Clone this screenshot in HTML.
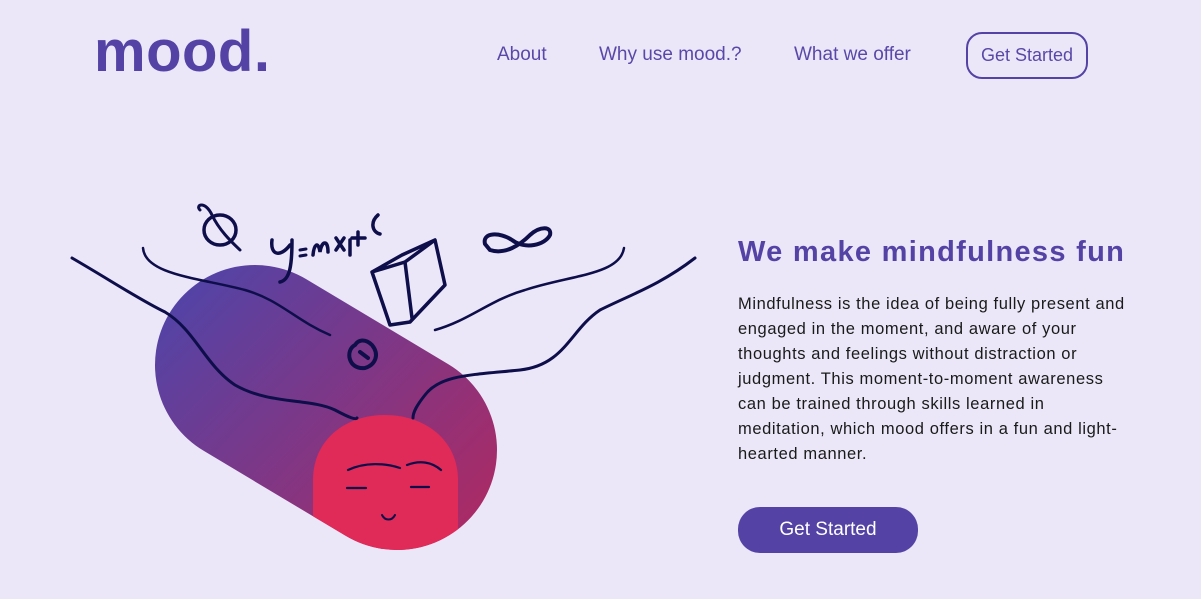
<!DOCTYPE html>
<html><head><meta charset="utf-8"><style>
*{margin:0;padding:0;box-sizing:border-box}
body{width:1201px;height:599px;background:#ebe7f8;font-family:"Liberation Sans",sans-serif;position:relative;overflow:hidden}
.logo{position:absolute;left:94px;top:18px;font-size:58px;font-weight:bold;color:#5443a5;letter-spacing:0.5px}
.nav a{position:absolute;top:44px;font-size:19px;color:#5a48a8;text-decoration:none;white-space:nowrap}
.gs{position:absolute;left:966px;top:32px;width:122px;height:47px;border:2px solid #5443a5;border-radius:16px;color:#5a48a8;font-size:18px;text-align:center;line-height:43px}
h1{position:absolute;left:738px;top:236px;font-size:29px;color:#5443a5;font-weight:bold;letter-spacing:1.3px;white-space:nowrap}
p{position:absolute;left:738px;top:292px;font-size:16.5px;line-height:25px;color:#1a1a1a;letter-spacing:0.6px;white-space:nowrap}
.btn{position:absolute;left:738px;top:507px;width:180px;height:46px;border-radius:22px;background:#5443a5;color:#fff;font-size:19px;text-align:center;line-height:46px}
svg{position:absolute;left:0;top:0}
</style></head><body>
<div class="logo">mood.</div>
<div class="nav"><a style="left:497px">About</a><a style="left:599px">Why use mood.?</a><a style="left:794px">What we offer</a></div>
<div class="gs">Get Started</div>
<svg width="720" height="599" viewBox="0 0 720 599">
<defs>
<linearGradient id="g" x1="200" y1="280" x2="470" y2="540" gradientUnits="userSpaceOnUse">
<stop offset="0" stop-color="#5443a5"/><stop offset="1" stop-color="#ac2a64"/></linearGradient>
<mask id="m"><rect width="720" height="599" fill="#000"/><line x1="255" y1="365" x2="397" y2="450" stroke="#fff" stroke-width="200" stroke-linecap="round"/></mask>
</defs>
<line x1="255" y1="365" x2="397" y2="450" stroke="url(#g)" stroke-width="200" stroke-linecap="round"/>
<g mask="url(#m)"><path d="M313 600 L313 480 C313 440 345 415 385 415 C425 415 458 440 458 480 L458 600 Z" fill="#e02a58"/></g>
<g fill="none" stroke="#0e0e4a" stroke-linecap="round">
<path d="M72 258 C110 280 140 300 165 312 C195 330 205 365 235 385 C270 405 310 398 335 410 C350 418 356 420 357 418" stroke-width="3"/>
<path d="M143 248 C145 275 200 278 245 290 C280 300 295 320 330 335" stroke-width="2.5"/>
<path d="M624 248 C620 275 570 275 525 290 C490 300 470 320 435 330" stroke-width="2.5"/>
<path d="M695 258 C660 285 630 295 600 310 C570 330 565 365 520 370 C470 375 440 375 425 395 C417 405 413 412 413 418" stroke-width="3"/>
<path d="M348 470 C365 462 385 463 400 468 M407 465 C420 460 432 462 441 470" stroke-width="2.2"/>
<path d="M347 488 H366 M411 487 H429" stroke-width="2.2"/>
<path d="M382 515 C385 521 392 521 395 515" stroke-width="2"/>
<ellipse cx="220" cy="230" rx="16" ry="15" stroke-width="3.5"/>
<path d="M200 210 C195 205 205 200 212 215 C220 232 235 245 240 250" stroke-width="3"/>
<path d="M272 240 C270 255 280 258 290 245 M292 240 C292 265 290 280 280 282" stroke-width="3.5"/>
<path d="M300 250 L306 249 M300 256 L306 255" stroke-width="3"/>
<path d="M313 255 C314 245 318 240 320 252 C322 240 328 240 328 252 M336 238 L344 250 M344 238 L336 250 M350 240 L350 255 M358 232 V245 M352 238 H365 M378 215 C370 222 372 232 380 234" stroke-width="3.5"/>
<path d="M372 272 L402 255 L435 240 L445 285 L410 322 L390 325 Z M372 272 L405 262 L435 240 M405 262 L412 318" stroke-width="3.5" stroke-linejoin="round"/>
<path d="M485 244 C482 232 500 232 512 240 C525 250 545 245 550 235 C552 226 540 226 530 235 C520 245 505 255 490 250 Z" stroke-width="4"/>
<path d="M355 345 C345 350 348 370 365 368 C375 365 380 355 372 345 C365 338 358 340 355 345 M360 352 L368 358" stroke-width="4"/>
</g>
</svg>
<h1>We make mindfulness fun</h1>
<p>Mindfulness is the idea of being fully present and<br>engaged in the moment, and aware of your<br>thoughts and feelings without distraction or<br>judgment. This moment-to-moment awareness<br>can be trained through skills learned in<br>meditation, which mood offers in a fun and light-<br>hearted manner.</p>
<div class="btn">Get Started</div>
</body></html>
